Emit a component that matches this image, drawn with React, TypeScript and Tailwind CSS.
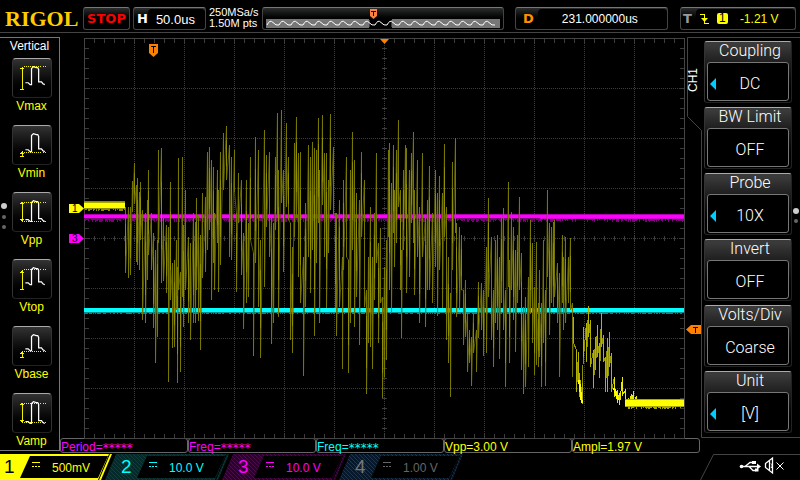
import type { ReactNode } from 'react'

type Column = [x: number, top: number, bottom: number]

// Peak envelope of channel 1: x, highest and lowest sample
const BURST: Column[] = [
  [125, 207, 273], [128, 207, 278], [130, 207, 275], [132, 181, 212], [134, 163, 204], [136, 185, 262],
  [137, 178, 265], [139, 192, 270], [140, 182, 240], [142, 210, 320], [145, 213, 323], [147, 200, 280],
  [148, 170, 255], [151, 213, 270], [153, 233, 328], [155, 250, 363], [157, 240, 337], [158, 150, 243],
  [161, 148, 283], [163, 215, 281], [166, 225, 293], [168, 227, 382], [170, 182, 300], [172, 263, 348],
  [174, 260, 347], [176, 240, 310], [177, 267, 383], [178, 158, 290], [180, 272, 372], [182, 157, 297],
  [183, 225, 327], [185, 190, 290], [188, 237, 323], [190, 243, 340], [193, 213, 323], [195, 222, 323],
  [196, 198, 290], [198, 215, 321], [200, 235, 350], [202, 193, 278], [205, 197, 272], [207, 152, 250],
  [209, 147, 230], [211, 160, 300], [213, 167, 263], [214, 213, 290], [217, 170, 243], [218, 190, 292],
  [220, 152, 265], [223, 133, 190], [226, 126, 180], [229, 145, 257], [231, 157, 260], [234, 150, 192],
  [236, 213, 292], [238, 173, 223], [241, 180, 275], [243, 233, 329], [246, 180, 303], [248, 223, 297],
  [250, 157, 240], [253, 253, 356], [255, 137, 263], [258, 150, 307], [260, 240, 358], [264, 130, 287],
  [266, 155, 227], [269, 152, 257], [271, 217, 344], [273, 223, 323], [275, 157, 230], [277, 113, 217],
  [278, 170, 317], [281, 110, 203], [283, 170, 272], [286, 123, 207], [288, 157, 220], [290, 223, 340],
  [292, 247, 353], [294, 143, 237], [296, 117, 217], [298, 153, 277], [300, 152, 303], [303, 257, 376],
  [305, 203, 307], [308, 145, 257], [310, 157, 293], [312, 142, 250], [314, 148, 336], [316, 150, 263],
  [318, 118, 223], [319, 170, 323], [322, 115, 205], [324, 153, 257], [326, 153, 308], [328, 180, 253],
  [330, 114, 210], [333, 147, 217], [335, 213, 308], [336, 213, 336], [339, 200, 307], [342, 257, 369],
  [343, 180, 270], [346, 157, 257], [348, 260, 373], [350, 170, 323], [352, 132, 250], [354, 160, 327],
  [356, 193, 297], [359, 200, 345], [361, 152, 237], [364, 180, 307], [366, 290, 394], [368, 257, 343],
  [370, 207, 347], [372, 257, 369], [374, 213, 300], [376, 153, 263], [378, 243, 343], [380, 228, 303],
  [382, 297, 398], [384, 267, 377], [386, 240, 360], [388, 150, 237], [389, 143, 290], [391, 183, 313],
  [393, 145, 233], [394, 190, 267], [396, 150, 243], [398, 120, 207], [400, 190, 290], [401, 250, 338],
  [403, 170, 250], [405, 145, 217], [406, 148, 293], [409, 170, 277], [411, 153, 223], [413, 132, 243],
  [414, 190, 295], [417, 160, 257], [419, 207, 323], [422, 153, 257], [425, 217, 327], [427, 200, 290],
  [429, 166, 290], [432, 213, 303], [435, 170, 267], [437, 193, 316], [439, 176, 270], [442, 193, 308],
  [444, 144, 237], [446, 207, 340], [448, 257, 363], [450, 293, 397], [452, 162, 270], [455, 138, 233],
  [456, 223, 317], [459, 227, 310], [461, 235, 290], [463, 290, 345], [465, 280, 337], [467, 313, 372],
  [469, 330, 363], [471, 337, 386], [473, 313, 353], [476, 330, 372], [478, 282, 338], [481, 283, 330],
  [483, 290, 356], [486, 247, 353], [488, 198, 297], [491, 237, 340], [493, 290, 367], [495, 240, 323],
  [497, 235, 330], [499, 257, 359], [501, 217, 303], [503, 208, 330], [505, 290, 387], [508, 182, 287],
  [509, 260, 363], [511, 212, 290], [513, 227, 320], [515, 250, 352], [517, 235, 303], [519, 197, 290],
  [521, 253, 370], [523, 307, 394], [525, 297, 387], [528, 277, 367], [530, 220, 313], [532, 243, 343],
  [534, 287, 375], [536, 242, 365], [538, 303, 367], [539, 270, 357], [541, 303, 387], [543, 240, 343],
  [545, 290, 386], [547, 190, 277], [549, 223, 335], [551, 227, 303], [553, 222, 307], [554, 220, 297],
  [557, 263, 323], [559, 273, 377], [562, 235, 303], [563, 257, 330], [565, 237, 323], [568, 257, 303],
  [570, 238, 310], [572, 303, 377], [573, 317, 343],
]

const TAIL: Column[] = [
  [573, 317, 343], [576, 350, 392], [578, 352, 380], [579, 373, 397], [580, 380, 400], [582, 383, 404],
  [583, 327, 357], [586, 323, 362], [588, 306, 337], [590, 320, 367], [593, 350, 388], [595, 337, 370],
  [597, 325, 357], [599, 343, 378], [601, 313, 347], [603, 335, 362], [605, 357, 392], [607, 338, 392],
  [609, 332, 367], [611, 353, 392], [614, 377, 397], [617, 390, 403], [619, 393, 405], [622, 377, 395],
  [625, 390, 406], [628, 398, 407], [631, 394, 406], [633, 391, 405], [636, 396, 406], [639, 399, 407],
]

function zigzag(columns: Column[]) {
  return columns.map(([x, top, bottom], i) => `${i === 0 ? 'M' : 'L'}${x + 0.5} ${top}V${bottom}`).join('')
}

function bars(columns: Column[]) {
  return columns.map(([x, top, bottom]) => `M${x + 0.5} ${top}V${bottom}`).join('')
}

// Brighter middle part of each column
function cores(columns: Column[]) {
  return columns
    .filter((_, i) => i % 2 === 0)
    .map(([x, top, bottom]) => {
      const cut = Math.round((bottom - top) / 4)
      return `M${x + 0.5} ${top + cut}V${bottom - cut}`
    })
    .join('')
}

function ticksX(y: number, length: number) {
  return Array.from({ length: 59 }, (_, i) => `M${94.5 + i * 10} ${y}v${length}`).join('')
}

function ticksY(x: number, length: number) {
  return Array.from({ length: 39 }, (_, i) => `M${x} ${48.5 + i * 10}h${length}`).join('')
}

// Ragged lower edge of a noisy trace
function fringe(from: number, to: number, y: number, height: number, seed: number) {
  let d = ''
  let n = seed
  for (let x = from; x < to; x++) {
    n = (n * 1103515245 + 12345) % 2147483648
    d += `M${x + 0.5} ${y}v${1 + (Math.floor(n / 65536) % height)}`
  }
  return d
}

function Plot() {
  return (
    <svg
      viewBox="60 33 627 405"
      className="relative z-10 block h-auto min-w-0 flex-1 overflow-visible"
      shapeRendering="crispEdges"
      role="img"
      aria-label="Waveforms"
    >
      <g stroke="#3c3c3c" fill="none">
        <rect x="84.5" y="38.5" width="600" height="400" stroke="#444" />
        {Array.from({ length: 11 }, (_, i) => (
          <path key={i} d={`M${134.5 + i * 50} 39V438`} strokeDasharray="1 1" />
        ))}
        {Array.from({ length: 7 }, (_, i) => (
          <path key={i} d={`M85 ${88.5 + i * 50}H684`} strokeDasharray="1 1" />
        ))}
        <path d={ticksX(39, 4) + ticksX(434, 4) + ticksX(236, 5)} />
        <path d={ticksY(85, 4) + ticksY(680, 4) + ticksY(382, 5)} />
      </g>

      {/* Channel 3 */}
      <path d="M84 216.5H684" stroke="#f0f" strokeWidth="3" />
      <path d="M84 214.5H684" stroke="#b400b4" />
      <path d={fringe(84, 684, 218, 4, 7)} stroke="#7a007a" />
      <path d="M540 218.5H684" stroke="#d800d8" />

      {/* Channel 2 */}
      <path d="M84 310H684" stroke="#0ff" strokeWidth="4" />
      <path d={fringe(84, 684, 312, 2, 3)} stroke="#008c8c" />

      {/* Channel 1 */}
      <path d={fringe(84, 125, 201, 2, 5)} stroke="#8c8c00" />
      <path d="M84 205.5H125" stroke="#a8a800" strokeWidth="7" />
      <path d="M84 205.5H125" stroke="#ff0" strokeWidth="5" />
      <path d={fringe(84, 125, 208, 3, 9)} stroke="#8c8c00" />
      <path d={zigzag(BURST)} fill="none" stroke="#565600" shapeRendering="auto" />
      <path d={bars(BURST)} stroke="#767600" />
      <path d={cores(BURST)} stroke="#8e8e00" />
      <path d={zigzag(TAIL)} fill="none" stroke="#909000" />
      <path d={bars(TAIL)} stroke="#b4b400" />
      <path d={zigzag(TAIL.slice(20))} fill="none" stroke="#e8e800" />
      <path d="M579 380L581 396L582 403M614 388L618 400" fill="none" stroke="#ff0" strokeWidth="2" />
      <path d="M625 403H684" stroke="#a8a800" strokeWidth="8" />
      <path d="M625 403H684" stroke="#ff0" strokeWidth="6" />
      <path d={fringe(628, 684, 406, 3, 2)} stroke="#a8a800" />

      {/* Markers */}
      <g shapeRendering="auto">
        <path d="M149 44h9v9l-4.500 4l-4.500-4z" fill="#ff8000" />
        <path d="M151 46.500h5M153.500 46v7" stroke="#000" />
        <path d="M380 39h9l-4.500 5z" fill="#ff8000" />
        <path d="M69 204h10l5 4.500l-5 4.500h-10z" fill="#ff0" />
        <path d="M69 234h10l5 4.500l-5 4.500h-10z" fill="#f0f" />
        <text x="72" y="212" className="font-['Liberation_Sans'] text-[10px]" fill="#000">
          1
        </text>
        <text x="72" y="242" className="font-['Liberation_Sans'] text-[10px]" fill="#000">
          3
        </text>
        <path d="M686 329.500l5-4.500h10v9h-10z" fill="#ff8000" />
        <path d="M693 327.500h5M695.500 327v6" stroke="#000" />
      </g>
    </svg>
  )
}

interface Measure {
  label: string
  high?: number
  low?: number
  arrow: [number, number]
  double?: boolean
  base: number
}

const MEASURES: Measure[] = [
  { label: 'Vmax', high: 7, arrow: [8, 32], base: 27 },
  { label: 'Vmin', low: 27, arrow: [26, 32], base: 27 },
  { label: 'Vpp', high: 9, low: 30, arrow: [9, 30], double: true, base: 30 },
  { label: 'Vtop', high: 10, arrow: [11, 31], base: 26 },
  { label: 'Vbase', low: 25, arrow: [25, 32], base: 25 },
  { label: 'Vamp', high: 9, low: 30, arrow: [9, 30], double: true, base: 31 },
]

function MeasureIcon({ high, low, arrow, double, base }: Measure) {
  const [top, bottom] = arrow
  return (
    <svg viewBox="0 0 40 40" className="size-full" fill="none" aria-hidden="true">
      <g stroke="#ff0" shapeRendering="crispEdges">
        {high && <path d={`M12 ${high + 0.5}H35`} strokeDasharray="1 1" />}
        {low && <path d={`M12 ${low + 0.5}H35`} strokeDasharray="1 1" />}
        <path d={`M9.500 ${top}V${bottom}M8 ${top + 1.5}h3M7 ${top + 2.5}h5`} />
        <path d={double ? `M8 ${bottom - 1.5}h3M7 ${bottom - 2.5}h5` : `M7 ${bottom + 0.5}h5`} />
      </g>
      <path
        d={`M13 ${base - 2}l3 0l2 2h1.500V${10}l2-2l3 1h1.500l1 2V${base - 3}l3 0l1.500 2l2 1`}
        stroke="#fff"
        strokeWidth="1.300"
      />
    </svg>
  )
}

function Sidebar() {
  return (
    <aside className="relative mt-1 mb-[3px] w-[60px] shrink-0 border-t border-r border-b border-[#777] text-center text-xs leading-4">
      <h2 className="pb-1">Vertical</h2>
      <div className="flex flex-col gap-[11px]">
        {MEASURES.map((m) => (
          <button key={m.label} className="flex flex-col items-center pl-1 text-[#ff0]">
            <span className="block size-10 rounded-sm border border-t-[#aaa] border-r-[#333] border-b-[#222] border-l-[#333] bg-linear-to-b from-[#333] to-black">
              <MeasureIcon {...m} />
            </span>
            {m.label}
          </button>
        ))}
      </div>
      <div className="absolute top-[165px] left-px flex flex-col items-center gap-[6px]">
        <i className="size-[6px] rounded-full bg-[#ccc]" />
        <i className="size-1 rounded-full bg-[#666]" />
        <i className="size-1 rounded-full bg-[#666]" />
      </div>
    </aside>
  )
}

const MENU = [
  { title: 'Coupling', value: 'DC', more: true },
  { title: 'BW Limit', value: 'OFF', more: false },
  { title: 'Probe', value: '10X', more: true },
  { title: 'Invert', value: 'OFF', more: false },
  { title: 'Volts/Div', value: 'Coarse', more: false },
  { title: 'Unit', value: '[V]', more: true },
]

function Menu() {
  return (
    <nav className="relative flex w-[113px] shrink-0 pt-1 pb-[5px]">
      <svg
        viewBox="687 37 113 401"
        className="absolute inset-x-0 bottom-0 w-full"
        fill="none"
        stroke="#444"
        aria-hidden="true"
      >
        <path d="M800 37.500H687.500V116.500L701.500 130.500V437.500H800" />
      </svg>
      <div className="mt-[29px] h-7 w-[14px] rotate-180 text-center text-xs leading-[12px] [writing-mode:vertical-rl]">
        CH1
      </div>
      <div className="flex flex-col gap-1 pt-1 pl-[3px]">
        {MENU.map((item) => (
          <button
            key={item.title}
            className="h-[62px] w-[88px] rounded-[3px] border border-t-[#aaa] border-r-[#222] border-b-[#222] border-l-[#333] bg-linear-to-b from-[#3a3a3a] from-5% via-[#222] via-30% to-black px-[2px] font-['Roboto'] text-base leading-5 font-light"
          >
            <span className="block h-[19px] pl-1 leading-4">{item.title}</span>
            <span className="relative flex h-[39px] items-center justify-center rounded-[3px] border border-[#777] bg-black pt-1 pl-1">
              {item.more && (
                <svg viewBox="0 0 6 12" className="absolute left-[2px] h-3 w-[6px]" fill="#0cf" aria-hidden="true">
                  <path d="M6 0v12L0 6z" />
                </svg>
              )}
              {item.value}
            </span>
          </button>
        ))}
      </div>
      <div className="absolute top-[175px] right-px flex flex-col items-center gap-[5px]">
        <i className="size-[6px] rounded-full bg-[#ccc]" />
        <i className="size-1 rounded-full bg-[#666]" />
      </div>
    </nav>
  )
}

function Panel({ className, children }: { className: string; children: ReactNode }) {
  return (
    <div
      className={`flex h-[23px] shrink-0 items-center rounded-[3px] border border-t-[#777] border-r-[#444] border-b-[#444] border-l-[#444] bg-linear-to-b from-[#2c2e2e] to-black to-70% ${className}`}
    >
      {children}
    </div>
  )
}

function MemoryBar() {
  const wave = 'M267 25' + 'q3 -6 6 -2.500t6 2.500'.repeat(19)
  return (
    <svg viewBox="263 8 240 21" className="h-[21px] w-full" fill="none" aria-hidden="true">
      <rect x="266" y="19" width="234" height="9" fill="#777" />
      <rect x="369" y="19" width="23" height="9" fill="#000" />
      <path d="M369.500 20v7M391.500 20v7" stroke="#1d4a78" />
      <path d={wave} stroke="#fff" />
      <path d="M370 9h7v7l-3.500 3l-3.500-3z" fill="#ff8040" />
      <path d="M371 11.500h5M373.500 11v5" stroke="#000" />
    </svg>
  )
}

function Header() {
  return (
    <header className="flex border-b border-[#444] pt-[7px] pr-1 pb-[2px] text-xs">
      <h1 className="w-[83px] shrink-0 pl-[5px] font-['Liberation_Serif'] text-[22px] leading-[23px] font-bold text-[#fc0]">
        RIGOL
      </h1>
      <Panel className="w-[47px] justify-center font-['DejaVu_Sans'] text-[13px] font-bold text-[#f00]">STOP</Panel>
      <Panel className="ml-[3px] w-[73px] pl-[3px]">
        <b className="font-['DejaVu_Sans'] text-[13px]">H</b>
        <span className="flex-1 rounded-sm bg-black pt-px pl-2 text-[13px] leading-[19px]">50.0us</span>
      </Panel>
      <div className="w-[56px] shrink-0 pl-[3px] text-[11px] leading-[11px] whitespace-nowrap">
        250MSa/s
        <br />
        1.50M pts
      </div>
      <Panel className="min-w-0 flex-1">
        <MemoryBar />
      </Panel>
      <Panel className="ml-[11px] w-[153px] pl-[7px]">
        <b className="font-['DejaVu_Sans'] text-[13px] text-[#ff9000]">D</b>
        <span className="ml-1 flex-1 rounded-sm bg-black pt-px pl-6 text-[12px] leading-[19px]">231.000000us</span>
      </Panel>
      <Panel className="ml-3 w-[116px] pl-[2px] text-[#ff0]">
        <b className="font-['DejaVu_Sans'] text-[13px] text-[#999]">T</b>
        <span className="ml-1 flex flex-1 items-center rounded-sm bg-black leading-[19px]">
          <svg viewBox="0 0 9 12" className="ml-1 h-3 w-[9px]" fill="none" stroke="#ff0" aria-label="Falling edge">
            <path d="M0 1.500h4.500v9h4" shapeRendering="crispEdges" />
            <path d="M1 5h7l-3.500 4z" fill="#ff0" stroke="none" />
          </svg>
          <span className="mx-2 w-[11px] rounded-xs bg-[#ff0] text-center leading-[11px] text-black">1</span>
          <span className="pt-px pl-1">-1.21 V</span>
        </span>
      </Panel>
    </header>
  )
}

const READOUTS = [
  { name: 'Period=', value: '*****', color: 'text-[#f0f]' },
  { name: 'Freq=', value: '*****', color: 'text-[#f0f]' },
  { name: 'Freq=', value: '*****', color: 'text-[#0ff]' },
  { name: 'Vpp=', value: '3.00 V', color: 'text-[#ff0]' },
  { name: 'Ampl=', value: '1.97 V', color: 'text-[#ff0]' },
]

function Readouts() {
  return (
    <div className="mr-[100px] mb-px grid grid-cols-5">
      {READOUTS.map((r, i) => (
        <div key={i} className={`h-[15px] rounded-[3px] border border-[#666] text-xs leading-4 ${r.color}`}>
          {r.name}
          {r.value === '*****' ? (
            <span className="align-[-1px] font-['DejaVu_Sans'] leading-none">{r.value}</span>
          ) : (
            r.value
          )}
        </div>
      ))}
    </div>
  )
}

const CHANNELS = [
  { id: '1', scale: '500mV', text: 'text-[#ff0]', digit: 'text-black', fill: '#ff0', hatch: '#ff0' },
  { id: '2', scale: '10.0 V', text: 'text-[#0ff]', digit: 'text-[#0ff]', fill: '#042a2a', hatch: '#0c4040' },
  { id: '3', scale: '10.0 V', text: 'text-[#f0f]', digit: 'text-[#f0f]', fill: '#2a042a', hatch: '#480c48' },
  { id: '4', scale: '1.00 V', text: 'text-[#666]', digit: 'text-[#777]', fill: '#06182c', hatch: '#123a5c' },
]

function Footer() {
  return (
    <footer className="flex h-[26px] overflow-hidden">
      {CHANNELS.map((c) => (
        <button key={c.id} className={`relative flex w-[117px] shrink-0 items-center text-left first:-ml-3 ${c.text}`}>
          <svg viewBox="0 0 124 26" className="absolute top-0 left-0 h-[26px] w-[124px]" aria-hidden="true">
            <defs>
              <pattern id={`hatch${c.id}`} width="4" height="4" patternUnits="userSpaceOnUse">
                <rect width="4" height="4" fill={c.fill} />
                <path d="M-1 -1L5 5" stroke={c.hatch} />
              </pattern>
            </defs>
            <path d="M11 0H124L113 26H0z" fill={`url(#hatch${c.id})`} />
            <path d="M42 2H120L110 24H32z" fill="#000" />
            <path d="M121.500 0L110.500 26" stroke="#000" />
          </svg>
          <span className={`relative w-[27px] pl-4 text-[19px] leading-5 ${c.digit}`}>{c.id}</span>
          <svg viewBox="0 0 8 6" className="relative mb-1 ml-[17px] h-[6px] w-2" stroke="currentColor" aria-label="DC">
            <path d="M0 .5h8M0 4.500h2M3 4.500h2M6 4.500h2" />
          </svg>
          <span className="relative ml-3 pt-px text-xs">{c.scale}</span>
        </button>
      ))}
      <svg viewBox="0 0 100 26" className="ml-auto h-[26px] w-[100px]" fill="none" stroke="#fff" aria-label="USB, sound off">
        <path d="M.5 26L13.500 .5H100" stroke="#444" />
        <path d="M42 12.500H59M45 12.500L50 8.500H53M49 12.500L53 16.500H56" strokeWidth="1.300" />
        <circle cx="41.500" cy="12.500" r="1.800" fill="#fff" stroke="none" />
        <path d="M57 9.500l4 3l-4 3zM52 7h4v3h-4zM55 14.500h3.500v3h-3.500z" fill="#fff" stroke="none" />
        <path d="M65.500 9.500L72.500 4v15L65.500 13.500zM69.500 7v9" strokeWidth="1.300" />
        <path d="M71 9.500c1.500 1.500 1.500 3 0 4.500" />
        <path d="M76.500 8.500l7 7M83.500 8.500l-7 7" />
      </svg>
    </footer>
  )
}

export default function App() {
  return (
    <div className="flex min-h-screen flex-col bg-black font-['Liberation_Sans',sans-serif] text-white">
      <Header />
      <main className="flex">
        <Sidebar />
        <div className="min-w-0 flex-1">
          <div className="flex items-start">
            <Plot />
            <Menu />
          </div>
          <Readouts />
        </div>
      </main>
      <Footer />
    </div>
  )
}
